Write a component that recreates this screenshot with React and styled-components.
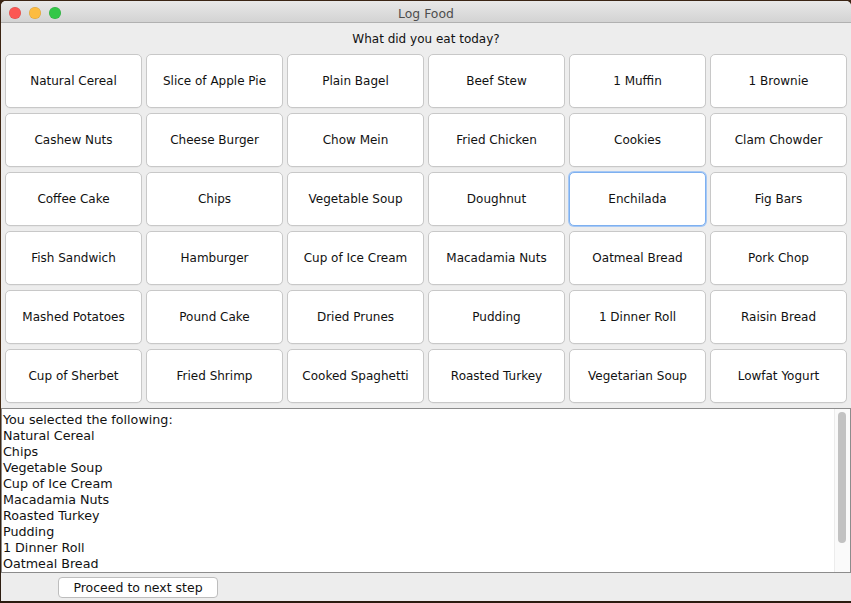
import React, {useState} from 'react';
import styled, {createGlobalStyle} from 'styled-components';

const foods = [
    'Natural Cereal', 'Slice of Apple Pie', 'Plain Bagel', 'Beef Stew', '1 Muffin', '1 Brownie',
    'Cashew Nuts', 'Cheese Burger', 'Chow Mein', 'Fried Chicken', 'Cookies', 'Clam Chowder',
    'Coffee Cake', 'Chips', 'Vegetable Soup', 'Doughnut', 'Enchilada', 'Fig Bars',
    'Fish Sandwich', 'Hamburger', 'Cup of Ice Cream', 'Macadamia Nuts', 'Oatmeal Bread', 'Pork Chop',
    'Mashed Potatoes', 'Pound Cake', 'Dried Prunes', 'Pudding', '1 Dinner Roll', 'Raisin Bread',
    'Cup of Sherbet', 'Fried Shrimp', 'Cooked Spaghetti', 'Roasted Turkey', 'Vegetarian Soup', 'Lowfat Yogurt',
];

const picked = [
    'Natural Cereal', 'Chips', 'Vegetable Soup', 'Cup of Ice Cream', 'Macadamia Nuts',
    'Roasted Turkey', 'Pudding', '1 Dinner Roll', 'Oatmeal Bread',
];

const GlobalStyle = createGlobalStyle`
    html, body {
        margin: 0;
        padding: 0;
        background: linear-gradient(180deg, #3a2414 0%, #4a2e16 60%, #2b1c10 100%);
        font-family: "DejaVu Sans", Verdana, sans-serif;
        overflow: hidden;
    }
`;

const Desktop = styled.div`
    width: 851px;
    height: 603px;
    padding: 1px 0 0 1px;
    box-sizing: border-box;
`;

const Window = styled.div`
    width: 850px;
    height: 600px;
    background: #ededed;
    border-radius: 5px 5px 0 0;
    overflow: hidden;
    display: flex;
    flex-direction: column;
`;

const TitleBar = styled.div`
    height: 22px;
    box-sizing: border-box;
    padding-top: 2px;
    flex-shrink: 0;
    background: linear-gradient(180deg, #e8e8e8 0%, #d3d3d3 100%);
    border-bottom: 1px solid #b1b1b1;
    display: flex;
    align-items: center;
    position: relative;
`;

const Lights = styled.div`
    display: flex;
    gap: 8px;
    padding-left: 8px;
`;

const Light = styled.span`
    width: 12px;
    height: 12px;
    border-radius: 50%;
    background: ${props => props.color};
    box-shadow: inset 0 0 0 0.5px rgba(0, 0, 0, 0.15);
`;

const Title = styled.div`
    position: absolute;
    left: 0;
    right: 0;
    top: 5px;
    text-align: center;
    font-size: 12.4px;
    color: #4d4d4d;
    pointer-events: none;
`;

const Prompt = styled.div`
    height: 31px;
    flex-shrink: 0;
    display: flex;
    align-items: center;
    justify-content: center;
    font-size: 12px;
    color: #111;
`;

const Grid = styled.div`
    display: grid;
    grid-template-columns: repeat(6, 137px);
    grid-auto-rows: 54px;
    column-gap: 4px;
    row-gap: 5px;
    padding: 0 0 0 4px;
`;

const FoodButton = styled.button`
    background: #fff;
    border: 1px solid ${props => props.focused ? '#7eb0ef' : '#c8c8c8'};
    box-shadow: ${props => props.focused ? '0 0 0 1px #a6c8f5' : '0 0.5px 0 rgba(0,0,0,0.06)'};
    border-radius: 5px;
    font-family: "DejaVu Sans", Verdana, sans-serif;
    font-size: 12px;
    color: #111;
    padding: 0;
    cursor: pointer;
    outline: none;
`;

const Output = styled.div`
    margin-top: 5px;
    height: 165px;
    flex-shrink: 0;
    box-sizing: border-box;
    border: 1px solid #8c8c8c;
    background: #fff;
    position: relative;
    overflow: hidden;
`;

const Lines = styled.div`
    padding: 3px 1px;
    font-size: 12.7px;
    line-height: 16px;
    color: #111;
`;

const Track = styled.div`
    position: absolute;
    top: 0;
    right: 0;
    bottom: 0;
    width: 15px;
    background: #fafafa;
    border-left: 1px solid #ececec;
`;

const Thumb = styled.div`
    position: absolute;
    top: 3px;
    left: 3px;
    width: 8px;
    height: 131px;
    border-radius: 4px;
    background: #c2c2c2;
`;

const Footer = styled.div`
    flex: 1;
    display: flex;
    align-items: center;
    padding-left: 57px;
`;

const ProceedButton = styled.button`
    width: 160px;
    height: 21px;
    background: #fff;
    border: 1px solid #bdbdbd;
    border-radius: 4px;
    font-family: "DejaVu Sans", Verdana, sans-serif;
    font-size: 12.5px;
    color: #111;
    padding: 0;
`;

const App = () => {
    const [focused, setFocused] = useState('Enchilada');
    return (
        <>
            <GlobalStyle />
            <Desktop>
                <Window>
                    <TitleBar>
                        <Lights>
                            <Light color="#fc5753" />
                            <Light color="#fdbc40" />
                            <Light color="#33c748" />
                        </Lights>
                        <Title>Log Food</Title>
                    </TitleBar>
                    <Prompt>What did you eat today?</Prompt>
                    <Grid>
                        {foods.map(food => (
                            <FoodButton key={food} focused={focused == food} onClick={() => setFocused(food)}>
                                {food}
                            </FoodButton>
                        ))}
                    </Grid>
                    <Output>
                        <Lines>
                            <div>You selected the following:</div>
                            {picked.map(item => <div key={item}>{item}</div>)}
                        </Lines>
                        <Track><Thumb /></Track>
                    </Output>
                    <Footer>
                        <ProceedButton>Proceed to next step</ProceedButton>
                    </Footer>
                </Window>
            </Desktop>
        </>
    );
};

export default App;
